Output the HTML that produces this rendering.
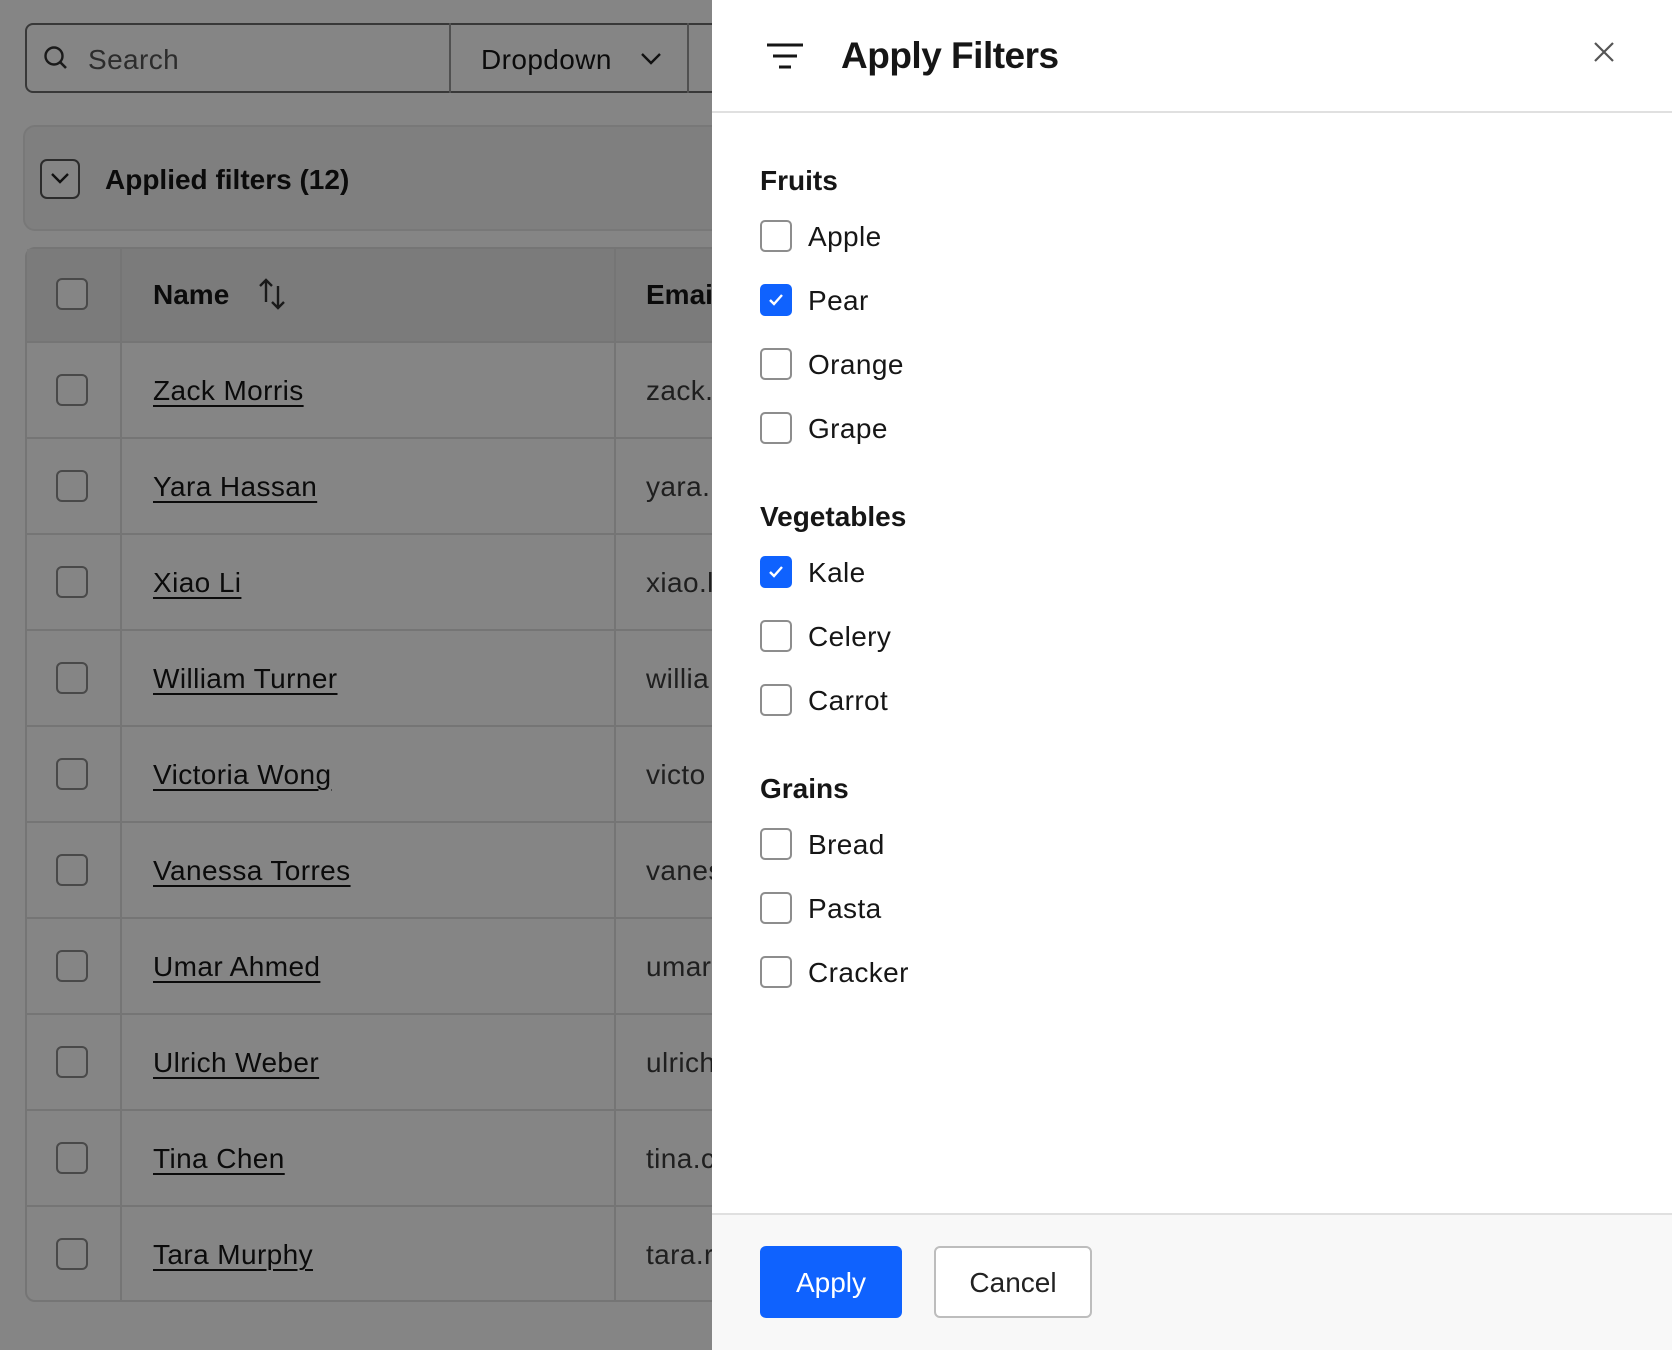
<!DOCTYPE html>
<html><head><meta charset="utf-8"><style>
*{box-sizing:border-box;margin:0;padding:0}
body{width:1672px;height:1350px;overflow:hidden;position:relative;background:#fff;font-family:"Liberation Sans",Arial,sans-serif;color:#161616}
.a{position:absolute}
.cb{position:absolute;width:32px;height:32px;border:2px solid #8d8d8d;border-radius:6px;background:#fff}
.tr{position:absolute;left:25px;width:1660px;height:96px;border-top:2px solid #e0e0e0}
.nm{position:absolute;left:153px;top:30px;font-size:28px;color:#161616;text-decoration:underline;text-underline-offset:5px;text-decoration-thickness:2px;letter-spacing:0.4px}
.em{position:absolute;left:646px;top:30px;font-size:28px;color:#3d3d3d;letter-spacing:0.4px}
.ov{position:absolute;left:0;top:0;width:712px;height:1350px;background:rgba(0,0,0,0.48)}
.panel{position:absolute;left:712px;top:0;width:960px;height:1350px;background:#fff}
.h{position:absolute;left:48px;font-size:28px;font-weight:bold}
.it{position:absolute;left:48px;height:32px}
.it .box{position:absolute;left:0;top:0;width:32px;height:32px;border:2px solid #8d8d8d;border-radius:5px;background:#fff}
.it .box.on{background:#0f62fe;border-color:#0f62fe}
.it span{position:absolute;left:48px;top:1px;font-size:28px;white-space:nowrap;color:#161616;letter-spacing:0.4px}
</style></head><body>
<div class="a" style="left:25px;top:23px;width:720px;height:70px;border:2px solid #6b6b6b;border-radius:8px;background:#fff"></div>
<svg class="a" style="left:42px;top:44px" width="28" height="28" viewBox="0 0 28 28"><circle cx="12" cy="12" r="8.5" fill="none" stroke="#333" stroke-width="2.4"/><line x1="18" y1="18" x2="24" y2="24" stroke="#333" stroke-width="2.6"/></svg>
<div class="a" style="left:88px;top:44px;font-size:28px;color:#555;letter-spacing:0.4px">Search</div>
<div class="a" style="left:449px;top:23px;width:2px;height:70px;background:#9a9a9a"></div>
<div class="a" style="left:481px;top:44px;font-size:28px;color:#161616;letter-spacing:0.4px">Dropdown</div>
<svg class="a" style="left:640px;top:50px" width="22" height="16" viewBox="0 0 22 16"><path d="M2 4l9 9 9-9" fill="none" stroke="#222" stroke-width="2.4"/></svg>
<div class="a" style="left:687px;top:23px;width:2px;height:70px;background:#9a9a9a"></div>

<div class="a" style="left:23px;top:125px;width:720px;height:106px;border:2px solid #e6e6e6;border-radius:12px;background:#f4f4f4"></div>
<div class="a" style="left:40px;top:159px;width:40px;height:40px;border:2px solid #555;border-radius:7px;background:#fff"></div>
<svg class="a" style="left:49px;top:170px" width="22" height="16" viewBox="0 0 22 16"><path d="M3 4l8 8 8-8" fill="none" stroke="#222" stroke-width="2.4"/></svg>
<div class="a" style="left:105px;top:164px;font-size:28px;font-weight:bold">Applied filters (12)</div>

<div class="a" style="left:25px;top:247px;width:700px;height:1055px;border:2px solid #e0e0e0;border-radius:10px;background:#fff;overflow:hidden"></div>
<div class="a" style="left:27px;top:249px;width:700px;height:92px;background:#ececec"></div>
<div class="a" style="left:120px;top:249px;width:2px;height:1052px;background:#e0e0e0"></div>
<div class="a" style="left:614px;top:249px;width:2px;height:1052px;background:#e0e0e0"></div>
<div class="cb" style="left:56px;top:278px"></div>
<div class="a" style="left:153px;top:279px;font-size:28px;font-weight:bold">Name</div>
<svg class="a" style="left:256px;top:276px" width="32" height="36" viewBox="0 0 32 36"><path d="M10 26V4M4 10l6-6 6 6M22 10v22M16 26l6 6 6-6" fill="none" stroke="#333" stroke-width="2.4"/></svg>
<div class="a" style="left:646px;top:279px;font-size:28px;font-weight:bold">Email</div>

<div class="tr" style="top:341px"></div><div class="cb" style="left:56px;top:374px"></div><div class="a nm" style="top:375px">Zack Morris</div><div class="a em" style="top:375px">zack.</div>
<div class="tr" style="top:437px"></div><div class="cb" style="left:56px;top:470px"></div><div class="a nm" style="top:471px">Yara Hassan</div><div class="a em" style="top:471px">yara.</div>
<div class="tr" style="top:533px"></div><div class="cb" style="left:56px;top:566px"></div><div class="a nm" style="top:567px">Xiao Li</div><div class="a em" style="top:567px">xiao.l</div>
<div class="tr" style="top:629px"></div><div class="cb" style="left:56px;top:662px"></div><div class="a nm" style="top:663px">William Turner</div><div class="a em" style="top:663px">willia</div>
<div class="tr" style="top:725px"></div><div class="cb" style="left:56px;top:758px"></div><div class="a nm" style="top:759px">Victoria Wong</div><div class="a em" style="top:759px">victo</div>
<div class="tr" style="top:821px"></div><div class="cb" style="left:56px;top:854px"></div><div class="a nm" style="top:855px">Vanessa Torres</div><div class="a em" style="top:855px">vanes</div>
<div class="tr" style="top:917px"></div><div class="cb" style="left:56px;top:950px"></div><div class="a nm" style="top:951px">Umar Ahmed</div><div class="a em" style="top:951px">umar</div>
<div class="tr" style="top:1013px"></div><div class="cb" style="left:56px;top:1046px"></div><div class="a nm" style="top:1047px">Ulrich Weber</div><div class="a em" style="top:1047px">ulrich</div>
<div class="tr" style="top:1109px"></div><div class="cb" style="left:56px;top:1142px"></div><div class="a nm" style="top:1143px">Tina Chen</div><div class="a em" style="top:1143px">tina.c</div>
<div class="tr" style="top:1205px"></div><div class="cb" style="left:56px;top:1238px"></div><div class="a nm" style="top:1239px">Tara Murphy</div><div class="a em" style="top:1239px">tara.r</div>

<div class="ov"></div>

<div class="panel">
  <svg class="a" style="left:54px;top:42px" width="38" height="28" viewBox="0 0 38 28"><path d="M1 3h36M7 14h24M13 25h12" stroke="#161616" stroke-width="3"/></svg>
  <div class="a" style="left:129px;top:35px;font-size:37px;font-weight:bold;letter-spacing:-0.5px">Apply Filters</div>
  <svg class="a" style="left:880px;top:40px" width="24" height="24" viewBox="0 0 24 24"><path d="M3 3l18 18M21 3L3 21" stroke="#555" stroke-width="2.2"/></svg>
  <div class="a" style="left:0;top:111px;width:960px;height:2px;background:#e0e0e0"></div>

  <div class="h" style="top:165px">Fruits</div>
  <div class="it" style="top:220px"><div class="box"></div><span>Apple</span></div>
  <div class="it" style="top:284px"><div class="box on"><svg width="28" height="28" viewBox="0 0 28 28"><path d="M8 14l4 4 8-9" fill="none" stroke="#fff" stroke-width="2.4"/></svg></div><span>Pear</span></div>
  <div class="it" style="top:348px"><div class="box"></div><span>Orange</span></div>
  <div class="it" style="top:412px"><div class="box"></div><span>Grape</span></div>

  <div class="h" style="top:501px">Vegetables</div>
  <div class="it" style="top:556px"><div class="box on"><svg width="28" height="28" viewBox="0 0 28 28"><path d="M8 14l4 4 8-9" fill="none" stroke="#fff" stroke-width="2.4"/></svg></div><span>Kale</span></div>
  <div class="it" style="top:620px"><div class="box"></div><span>Celery</span></div>
  <div class="it" style="top:684px"><div class="box"></div><span>Carrot</span></div>

  <div class="h" style="top:773px">Grains</div>
  <div class="it" style="top:828px"><div class="box"></div><span>Bread</span></div>
  <div class="it" style="top:892px"><div class="box"></div><span>Pasta</span></div>
  <div class="it" style="top:956px"><div class="box"></div><span>Cracker</span></div>

  <div class="a" style="left:0;top:1213px;width:960px;height:137px;background:#f8f8f8;border-top:2px solid #e0e0e0"></div>
  <div class="a" style="left:48px;top:1246px;width:142px;height:72px;background:#0f62fe;border-radius:6px;color:#fff;font-size:28px;text-align:center;line-height:74px">Apply</div>
  <div class="a" style="left:222px;top:1246px;width:158px;height:72px;background:#fff;border:2px solid #bdbdbd;border-radius:6px;color:#222;font-size:28px;text-align:center;line-height:70px">Cancel</div>
</div>
</body></html>
